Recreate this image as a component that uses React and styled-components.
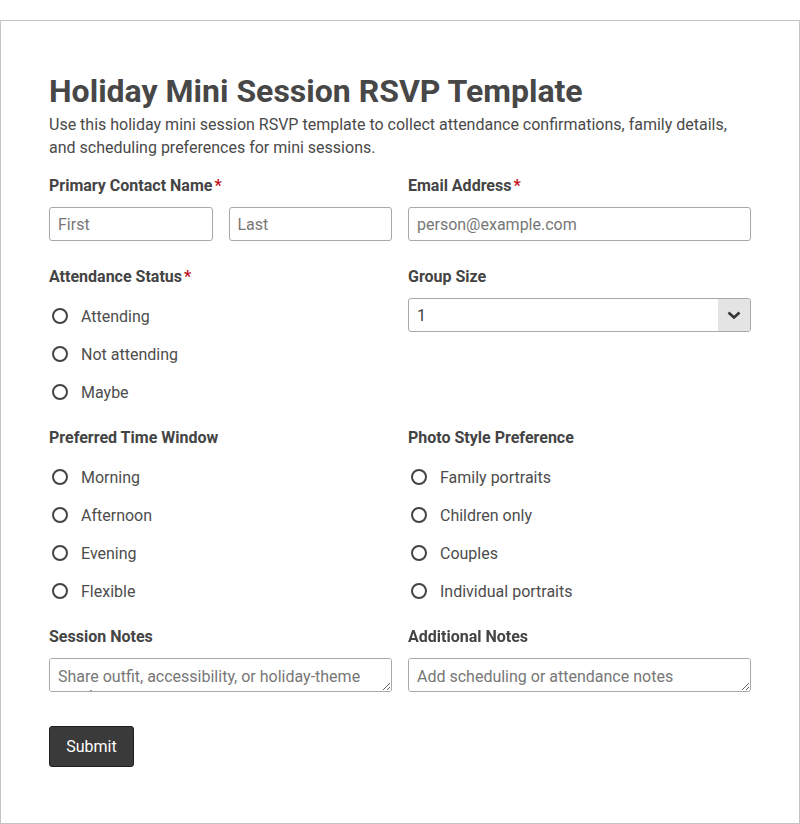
import React from "react";
import styled, { createGlobalStyle } from "styled-components";

const GlobalStyle = createGlobalStyle`
  * { box-sizing: border-box; }
  body {
    margin: 0;
    font-family: Roboto, "Liberation Sans", Arial, sans-serif;
    color: #444;
    background: #fff;
  }
`;

const Page = styled.div`
  padding-top: 20px;
`;

const Card = styled.form`
  border: 1px solid #c4c4c4;
  height: 804px;
  padding: 51px 48px 0;
`;

const Title = styled.h1`
  margin: 0 0 3px;
  font-size: 32px;
  line-height: 38px;
  font-weight: 700;
  color: #474747;
`;

const Description = styled.p`
  margin: 0 0 17px;
  font-size: 16px;
  line-height: 23px;
  color: #4a4a4a;
`;

const Grid = styled.div`
  display: grid;
  grid-template-columns: 1fr 1fr;
  column-gap: 16px;
  row-gap: 24px;
`;

const Field = styled.div`
  display: flex;
  flex-direction: column;
  margin-bottom: ${(p) => p.$extra || 0}px;
`;

const Label = styled.div`
  font-size: 16px;
  line-height: 20px;
  font-weight: 700;
  color: #444;
  margin-bottom: 11px;
`;

const Req = styled.span`
  color: #c1121f;
  margin-left: 2px;
`;

const Pair = styled.div`
  display: grid;
  grid-template-columns: 1fr 1fr;
  gap: 16px;
`;

const Input = styled.input`
  height: 34px;
  width: 100%;
  border: 1px solid #a8a8a8;
  border-radius: 3px;
  padding: 0 8px;
  font-family: inherit;
  font-size: 16px;
  color: #444;
  &::placeholder { color: #777; }
`;

const TextArea = styled.textarea`
  height: 34px;
  width: 100%;
  border: 1px solid #a8a8a8;
  border-radius: 3px;
  padding: 8px 8px 6px;
  font-family: inherit;
  font-size: 16px;
  line-height: 20px;
  color: #444;
  resize: vertical;
  &::placeholder { color: #777; }
`;

const SelectWrap = styled.div`
  position: relative;
  height: 34px;
`;

const Select = styled.select`
  appearance: none;
  width: 100%;
  height: 34px;
  border: 1px solid #a8a8a8;
  border-radius: 3px;
  padding: 0 40px 0 8px;
  font-family: inherit;
  font-size: 16px;
  color: #444;
  background: #fff;
`;

const Arrow = styled.span`
  position: absolute;
  top: 1px;
  right: 1px;
  bottom: 1px;
  width: 32px;
  background: #e4e4e4;
  border-radius: 0 2px 2px 0;
  display: flex;
  align-items: center;
  justify-content: center;
  pointer-events: none;
`;

const RadioList = styled.div`
  display: flex;
  flex-direction: column;
  gap: 14px;
  margin-top: 6px;
`;

const RadioRow = styled.label`
  display: flex;
  align-items: center;
  height: 24px;
  gap: 13px;
  font-size: 16px;
  color: #4d4d4d;
  padding-left: 3px;
`;

const RadioDot = styled.input`
  appearance: none;
  margin: 0;
  width: 16px;
  height: 16px;
  border: 2px solid #444;
  border-radius: 50%;
  flex: none;
`;

const Actions = styled.div`
  margin-top: 34px;
`;

const Button = styled.button`
  height: 41px;
  width: 85px;
  padding: 0;
  background: #3a3a3a;
  color: #fff;
  border: 1px solid #1f1f1f;
  border-radius: 3px;
  font-family: inherit;
  font-size: 16px;
`;

const Radios = ({ name, options }) => (
  <RadioList>
    {options.map((o) => (
      <RadioRow key={o}>
        <RadioDot type="radio" name={name} />
        {o}
      </RadioRow>
    ))}
  </RadioList>
);

export default function App() {
  return (
    <Page>
      <GlobalStyle />
      <Card onSubmit={(e) => e.preventDefault()}>
        <Title>Holiday Mini Session RSVP Template</Title>
        <Description>
          Use this holiday mini session RSVP template to collect attendance confirmations, family details,
          and scheduling preferences for mini sessions.
        </Description>
        <Grid>
          <Field $extra={2}>
            <Label>
              Primary Contact Name<Req>*</Req>
            </Label>
            <Pair>
              <Input placeholder="First" />
              <Input placeholder="Last" />
            </Pair>
          </Field>
          <Field $extra={2}>
            <Label>
              Email Address<Req>*</Req>
            </Label>
            <Input placeholder="person@example.com" />
          </Field>

          <Field>
            <Label>
              Attendance Status<Req>*</Req>
            </Label>
            <Radios name="attendance" options={["Attending", "Not attending", "Maybe"]} />
          </Field>
          <Field>
            <Label>Group Size</Label>
            <SelectWrap>
              <Select defaultValue="1">
                {["1", "2", "3", "4", "5", "6+"].map((v) => (
                  <option key={v}>{v}</option>
                ))}
              </Select>
              <Arrow>
                <svg width="14" height="10" viewBox="0 0 14 10">
                  <path d="M1.5 2.5l5.5 5 5.5-5" fill="none" stroke="#333" strokeWidth="2.6" />
                </svg>
              </Arrow>
            </SelectWrap>
          </Field>

          <Field>
            <Label>Preferred Time Window</Label>
            <Radios name="time" options={["Morning", "Afternoon", "Evening", "Flexible"]} />
          </Field>
          <Field>
            <Label>Photo Style Preference</Label>
            <Radios
              name="style"
              options={["Family portraits", "Children only", "Couples", "Individual portraits"]}
            />
          </Field>

          <Field>
            <Label>Session Notes</Label>
            <TextArea placeholder="Share outfit, accessibility, or holiday-theme needs" />
          </Field>
          <Field>
            <Label>Additional Notes</Label>
            <TextArea placeholder="Add scheduling or attendance notes" />
          </Field>
        </Grid>
        <Actions>
          <Button type="submit">Submit</Button>
        </Actions>
      </Card>
    </Page>
  );
}
